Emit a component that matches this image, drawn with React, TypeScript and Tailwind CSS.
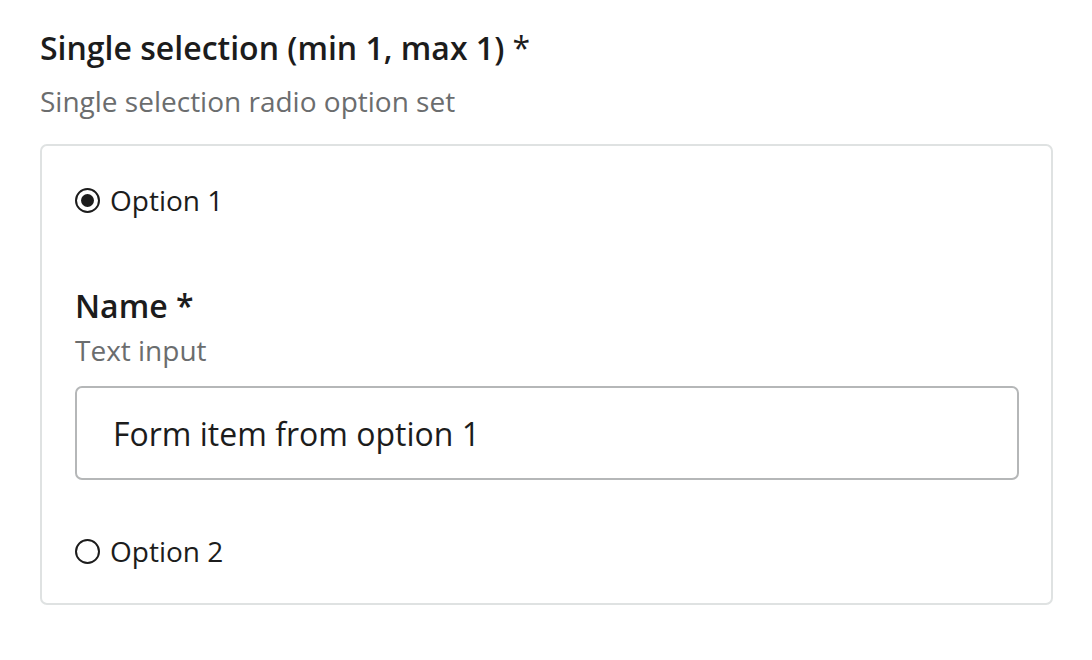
import { useState } from "react";

function Radio({ checked }: { checked: boolean }) {
  return (
    <span className="flex h-[25px] w-[25px] shrink-0 items-center justify-center rounded-full border-[2.5px] border-[#1c1c1c]">
      {checked && <span className="h-[13px] w-[13px] rounded-full bg-[#1c1c1c]" />}
    </span>
  );
}

export default function App() {
  const [selected, setSelected] = useState(1);
  const [name, setName] = useState("Form item from option 1");

  return (
    <div
      className="min-h-[660px] bg-white px-10 pt-[26px] text-[#1c1c1c]"
      style={{ fontFamily: '"Open Sans", "Noto Sans", sans-serif' }}
    >
      <h2 className="text-[32px] font-semibold leading-[44px]">
        Single selection (min 1, max 1) <span className="font-normal">*</span>
      </h2>
      <p className="mt-3 text-[28px] leading-[38px] text-[#6b6d6e]">
        Single selection radio option set
      </p>

      <div className="mt-6 w-[1013px] rounded-[7px] border-2 border-[#dfe2e2] px-[33px] pb-[33px] pt-[35px]">
        <label
          className="flex h-[38px] cursor-pointer items-center gap-[10px] text-[28px]"
          onClick={() => setSelected(1)}
        >
          <Radio checked={selected === 1} />
          <span>Option 1</span>
        </label>

        {selected === 1 && (
          <div className="mt-[65px]">
            <div className="text-[32px] font-semibold leading-[44px]">Name *</div>
            <div className="mt-[3px] text-[28px] leading-[38px] text-[#6b6d6e]">Text input</div>
            <input
              value={name}
              onChange={(e) => setName(e.target.value)}
              className="mt-[17px] h-[94px] w-[944px] rounded-[7px] border-2 border-[#b5b7b8] px-9 text-[32px] text-[#1c1c1c] outline-none"
            />
          </div>
        )}

        <label
          className="mt-[52px] flex h-[38px] cursor-pointer items-center gap-[10px] text-[28px]"
          onClick={() => setSelected(2)}
        >
          <Radio checked={selected === 2} />
          <span>Option 2</span>
        </label>
      </div>
    </div>
  );
}
